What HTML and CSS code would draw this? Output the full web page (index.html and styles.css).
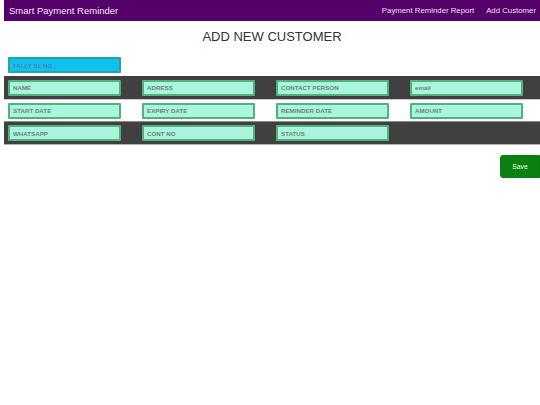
FILE: index.html
```html
<!DOCTYPE html>
<html>
<head>
<meta charset="utf-8">
<link rel="stylesheet" href="styles.css">
</head>
<body>
<nav class="nav">
  <span class="brand">Smart Payment Reminder</span>
  <div class="links">
    <a class="link">Payment Reminder Report</a>
    <a class="link">Add Customer</a>
  </div>
</nav>
<h1 class="title">ADD NEW CUSTOMER</h1>
<div class="tally-row">
  <input class="field tally" placeholder="TALLY SL NO">
</div>
<div class="grid">
  <div class="row dark">
    <div class="cell"><input class="field" placeholder="NAME"></div>
    <div class="cell"><input class="field" placeholder="ADRESS"></div>
    <div class="cell"><input class="field" placeholder="CONTACT PERSON"></div>
    <div class="cell"><input class="field" placeholder="email"></div>
  </div>
  <div class="row light">
    <div class="cell"><input class="field" placeholder="START DATE"></div>
    <div class="cell"><input class="field" placeholder="EXPIRY DATE"></div>
    <div class="cell"><input class="field" placeholder="REMINDER DATE"></div>
    <div class="cell"><input class="field" placeholder="AMOUNT"></div>
  </div>
  <div class="row dark last">
    <div class="cell"><input class="field" placeholder="WHATSAPP"></div>
    <div class="cell"><input class="field" placeholder="CONT NO"></div>
    <div class="cell"><input class="field" placeholder="STATUS"></div>
    <div class="cell"></div>
  </div>
</div>
<div class="actions">
  <button class="save">Save</button>
</div>
</body>
</html>
```

FILE: styles.css
```css
html, body {
  margin: 0;
  padding: 0;
  background: #ffffff;
}
body {
  margin-left: 4px;
  font-family: "Liberation Sans", Arial, sans-serif;
  overflow: hidden;
}
.nav {
  height: 21px;
  background: #55006a;
  display: flex;
  align-items: center;
  justify-content: space-between;
  padding: 0 4px 0 5px;
}
.brand {
  color: #ececec;
  font-size: 9.5px;
}
.links {
  display: flex;
  gap: 12px;
}
.link {
  color: #e6e0e8;
  font-size: 7.8px;
}
.title {
  font-size: 13px;
  font-weight: normal;
  line-height: 15px;
  text-align: center;
  color: #333;
  margin: 8px 0 13px 0;
}
.tally-row {
  padding: 0 4px;
  height: 16px;
  margin-bottom: 3px;
}
.field {
  display: block;
  box-sizing: border-box;
  width: 113px;
  height: 16px;
  margin: 0;
  border: 2px solid #52b27a;
  border-radius: 1px;
  background: #a9f6de;
  font-family: "Liberation Sans", Arial, sans-serif;
  font-size: 6.2px;
  font-weight: bold;
  padding: 0 3px;
  outline: none;
}
.field::placeholder {
  color: #728079;
}
.tally {
  background: #10c0f0;
  border-color: #22a898;
}
.tally::placeholder {
  color: #4a8aa6;
}
.grid {
  width: 536px;
}
.row {
  display: grid;
  grid-template-columns: repeat(4, 1fr);
  height: 23px;
  align-items: center;
  box-sizing: border-box;
}
.row.dark {
  background: #404040;
}
.row.light {
  background: #ffffff;
  border-top: 1px solid #c8c8c8;
  border-bottom: 1px solid #8a8a8a;
}
.row.last {
  border-bottom: 1px solid #b0b0b0;
}
.cell {
  padding-left: 4px;
}
.actions {
  display: flex;
  justify-content: flex-end;
  margin-top: 10px;
}
.save {
  width: 40px;
  height: 23px;
  background: #0a800f;
  border: 1px solid #0b7a10;
  border-radius: 3px 0 0 3px;
  color: #f2fff2;
  font-family: "Liberation Sans", Arial, sans-serif;
  font-size: 6.8px;
  padding: 0;
}
```
